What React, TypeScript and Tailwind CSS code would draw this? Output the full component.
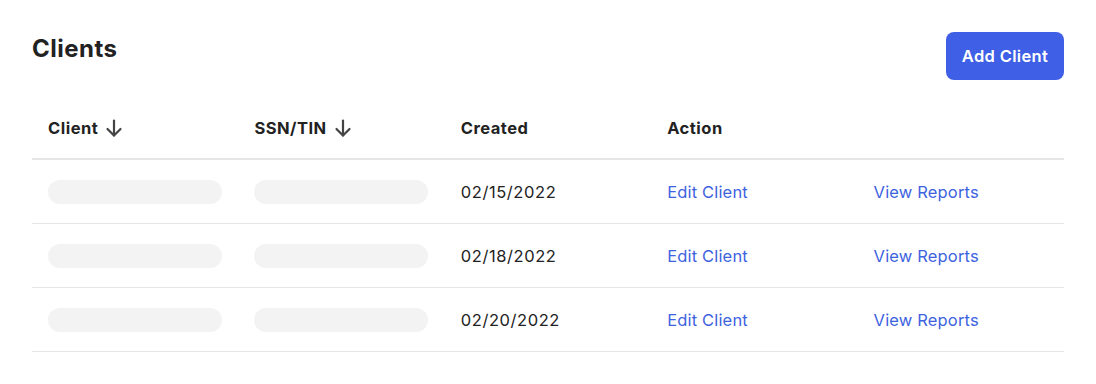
import React from "react";

const ArrowDown = () => (
  <svg width="20" height="20" viewBox="0 0 20 20" fill="none" stroke="#444444" strokeWidth="2.2" strokeLinecap="round" strokeLinejoin="round" className="ml-[6px]">
    <path d="M10 2.5v15" />
    <path d="M3.5 11l6.5 6.5 6.5-6.5" />
  </svg>
);

const rows = ["02/15/2022", "02/18/2022", "02/20/2022"];

export default function App() {
  return (
    <div className="w-[1096px] h-[384px] bg-white px-8 pt-8" style={{ fontFamily: "Inter, 'Noto Sans', sans-serif" }}>
      <div className="flex items-start justify-between">
        <h1 className="text-[24px] font-bold tracking-[0.02em] text-[#222] leading-[32px] mt-[1px]">Clients</h1>
        <button className="h-12 w-[118px] rounded-lg bg-[#3e5fe6] text-white text-[16.5px] tracking-[0.02em] font-semibold">Add Client</button>
      </div>
      <div className="mt-[16px]">
        <div className="grid grid-cols-5 h-[64px] pt-[2px] items-center border-b-2 border-[#e6e6e6] text-[16.5px] tracking-[0.03em] font-bold text-[#222]">
          <div className="px-4 flex items-center">Client<ArrowDown /></div>
          <div className="px-4 flex items-center">SSN/TIN<ArrowDown /></div>
          <div className="px-4">Created</div>
          <div className="px-4">Action</div>
          <div className="px-4"></div>
        </div>
        {rows.map((d) => (
          <div key={d} className="grid grid-cols-5 h-[64px] pt-[2px] items-center border-b border-[#e6e6e6] text-[16.5px] tracking-[0.01em] text-[#222]">
            <div className="px-4 -mt-[2px]"><div className="w-[174px] h-6 rounded-full bg-[#f3f3f3]" /></div>
            <div className="px-4 -mt-[2px]"><div className="w-[174px] h-6 rounded-full bg-[#f3f3f3]" /></div>
            <div className="px-4 tracking-[0.035em]">{d}</div>
            <div className="px-4 text-[#3e63e0]">Edit Client</div>
            <div className="px-4 text-[#3e63e0]">View Reports</div>
          </div>
        ))}
      </div>
    </div>
  );
}
